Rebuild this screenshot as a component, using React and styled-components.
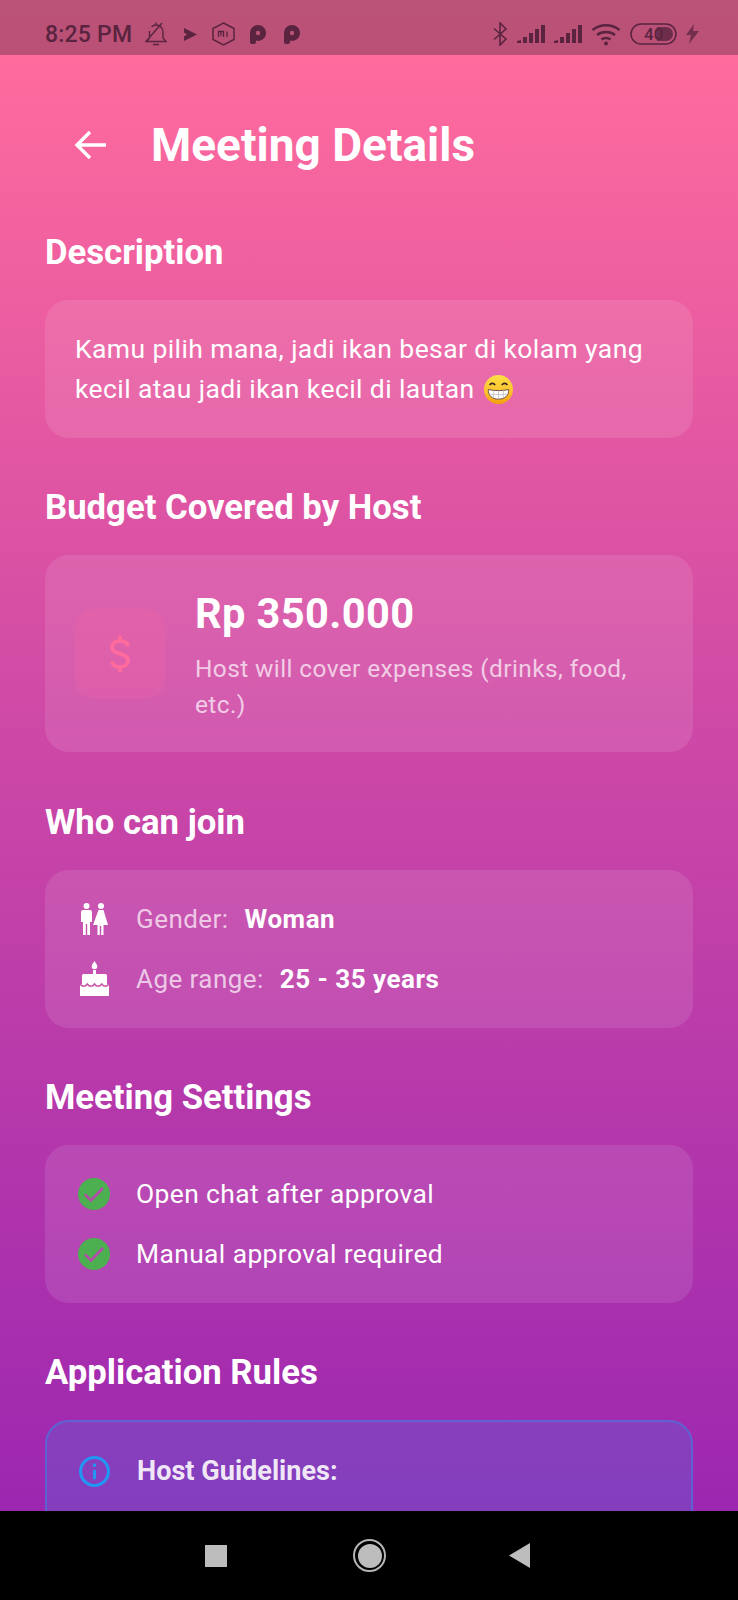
import styled, { createGlobalStyle } from "styled-components";

const Global = createGlobalStyle`
  html, body { margin: 0; padding: 0; background: #000; }
  body { font-family: Roboto, "Liberation Sans", sans-serif; }
`;

const Phone = styled.div`
  width: 738px;
  height: 1600px;
  display: flex;
  flex-direction: column;
  overflow: hidden;
`;

const StatusBar = styled.div`
  height: 55px;
  flex: none;
  background: linear-gradient(to bottom, #bb5278, #ba5076);
  color: #5a2440;
  display: flex;
  align-items: center;
  justify-content: space-between;
  padding: 13px 39px 0 45px;
  box-sizing: border-box;
`;

const StatusGroup = styled.div`
  display: flex;
  align-items: center;
  gap: ${(p) => p.$gap || 12}px;
`;

const Clock = styled.span`
  font-size: 23px;
  font-weight: 500;
  letter-spacing: 0.2px;
  margin-right: -3px;
`;

const Screen = styled.div`
  flex: 1;
  min-height: 0;
  overflow: hidden;
  background: linear-gradient(to bottom, #ff6b9d 0%, #ca46a7 50%, #9c27b0 100%);
  padding: 0 45px;
`;

const Header = styled.header`
  display: flex;
  align-items: center;
  height: 100px;
  margin: 40px 0 38px;
  padding-left: 29px;
  gap: 45px;
`;

const BackButton = styled.button`
  border: 0;
  background: none;
  padding: 0;
  display: flex;
  color: #fff;
`;

const Title = styled.h1`
  margin: 0;
  color: #fff;
  font-size: 46px;
  font-weight: 700;
`;

const SectionTitle = styled.h2`
  margin: 0 0 28px;
  color: #fff;
  font-size: 34.7px;
  line-height: 39px;
  font-weight: 700;
`;

const Section = styled.section`
  margin-bottom: 50.3px;
`;

const Card = styled.div`
  border-radius: 24px;
  background: rgba(255, 255, 255, 0.1);
  padding: 29px 30px;
`;

const Description = styled.p`
  margin: 0;
  color: #fff;
  font-size: 26.5px;
  line-height: 40px;
  letter-spacing: 0.4px;
`;

const BudgetRow = styled.div`
  display: flex;
  align-items: center;
  gap: 30px;
`;

const BudgetIcon = styled.div`
  width: 90px;
  height: 90px;
  flex: none;
  border-radius: 20px;
  background: rgba(255, 107, 157, 0.2);
  display: flex;
  align-items: center;
  justify-content: center;
  color: #ff6b9d;
`;

const Amount = styled.div`
  color: #fff;
  font-size: 41.6px;
  font-weight: 700;
  line-height: 59px;
  letter-spacing: 0.4px;
`;

const Note = styled.div`
  margin-top: 8px;
  color: rgba(255, 255, 255, 0.7);
  font-size: 24.45px;
  line-height: 36px;
  letter-spacing: 0.4px;
`;

const List = styled.div`
  display: flex;
  flex-direction: column;
  gap: 20px;
`;

const Row = styled.div`
  display: flex;
  align-items: center;
  gap: 23px;
  height: 40px;
`;

const RowIcon = styled.div`
  width: 38px;
  flex: none;
  display: flex;
  justify-content: center;
`;

const Label = styled.span`
  color: rgba(255, 255, 255, 0.7);
  font-size: 26px;
  letter-spacing: 0.45px;
  margin-right: 16px;
`;

const Value = styled.span`
  color: #fff;
  font-size: 26px;
  font-weight: 700;
  letter-spacing: 0.5px;
`;

const Plain = styled.span`
  color: #fff;
  font-size: 26.4px;
  letter-spacing: 0.4px;
`;

const InfoCard = styled.div`
  border-radius: 24px 24px 0 0;
  border: 2px solid rgba(33, 150, 243, 0.4);
  background: rgba(33, 150, 243, 0.2);
  padding: 33px 32px;
  height: 200px;
  box-sizing: border-box;
`;

const InfoHead = styled.div`
  display: flex;
  align-items: center;
  gap: 27px;
  color: rgba(255, 255, 255, 0.9);
  font-size: 27.1px;
  font-weight: 700;
`;

const NavBar = styled.nav`
  height: 89px;
  flex: none;
  background: #000;
  display: flex;
  align-items: center;
  padding-left: 205px;
`;

const NavSquare = styled.div`
  width: 22px;
  height: 22px;
  background: #bdbdbd;
`;

const NavCircle = styled.div`
  width: 33px;
  height: 33px;
  margin-left: 126px;
  box-sizing: border-box;
  border-radius: 50%;
  border: 2px solid #b5b5b5;
  display: flex;
  align-items: center;
  justify-content: center;
  &::after {
    content: "";
    width: 24px;
    height: 24px;
    border-radius: 50%;
    background: #bdbdbd;
  }
`;

const NavBack = styled.div`
  width: 21px;
  height: 25px;
  margin-left: 123px;
  background: #bdbdbd;
  clip-path: polygon(0 50%, 100% 0, 100% 100%);
`;

const BellOff = () => (
  <svg width="25" height="26" viewBox="0 0 25 26" fill="none" stroke="currentColor" strokeWidth="1.4">
    <path d="M2 20.500h20l-3-3.500v-6c0-4-3-7-7-7-1.700 0-3.300.7-4.500 1.800M5.500 10v7l-3 3.500M9 23.500h6M12 1.500V4M1.500 21 18 2" />
  </svg>
);

const PlayMark = () => (
  <svg width="13" height="13" viewBox="0 0 13 13" fill="currentColor">
    <path d="M0 0 13 6.500 0 13V8.500L3 6.500 0 4.500z" />
  </svg>
);

const MiBadge = () => (
  <svg width="23" height="24" viewBox="0 0 23 24" fill="none" stroke="currentColor">
    <path d="M11.500 1 22 6.500v11L11.500 23 1 17.500v-11z" strokeWidth="1.5" />
    <path d="M6.500 15V9.500h5V15M9 9.500V14M15 9.500V15" strokeWidth="1.3" />
  </svg>
);

const PMark = () => (
  <svg width="19" height="19" viewBox="0 0 19 19" fill="currentColor">
    <path fillRule="evenodd" d="M0 8a8 8 0 0 1 16 0 8 8 0 0 1-10 7.600V17a2 2 0 0 1-2 2H2a2 2 0 0 1-2-2zM8 5.800a2.200 2.200 0 1 0 0 4.400 2.200 2.200 0 0 0 0-4.400z" />
  </svg>
);

const Bluetooth = () => (
  <svg width="15" height="24" viewBox="0 0 15 24" fill="none" stroke="currentColor" strokeWidth="1.6">
    <path d="M1 6.500 13 17l-6 6V1l6 6L1 17.500" />
  </svg>
);

const Signal = () => (
  <svg width="28" height="20" viewBox="0 0 28 20" fill="currentColor">
    <path d="M0 17l4-1v3H0zM6 13h4v6H6zM12 9h4v10h-4zM18 5h4v14h-4zM24 1h4v18h-4z" />
  </svg>
);

const Wifi = () => (
  <svg width="30" height="24" viewBox="0 0 30 24" fill="none" stroke="currentColor" strokeWidth="2.5">
    <path d="M1.500 8C9 1.500 21 1.500 28.500 8M6 13c5-4 13-4 18 0M10.500 17.500c2.500-2 6.500-2 9 0" />
    <circle cx="15" cy="21.500" r="2" fill="currentColor" stroke="none" />
  </svg>
);

const Battery = () => (
  <svg width="47" height="22" viewBox="0 0 47 22">
    <rect x="1" y="1" width="45" height="20" rx="10" fill="none" stroke="currentColor" strokeWidth="1.5" />
    <path d="M27 4h9a7 7 0 0 1 0 14h-9z" fill="currentColor" opacity="0.8" />
    <text x="14" y="17" fontSize="17" fontWeight="500" fontFamily="Roboto" fill="currentColor">40</text>
  </svg>
);

const Bolt = () => (
  <svg width="13" height="20" viewBox="0 0 13 20" fill="currentColor" opacity="0.75">
    <path d="M8 0 0 11h5l-2 9 10-13H7z" />
  </svg>
);

const BackArrow = () => (
  <svg width="32" height="30" viewBox="0 0 32 30" fill="none" stroke="currentColor" strokeWidth="3.4">
    <path d="M32 15H3M16 2 3 15l13 13" />
  </svg>
);

const Dollar = () => (
  <svg width="20" height="36" viewBox="0 0 20 36" fill="none" stroke="currentColor" strokeWidth="3.8">
    <path d="M18 10.500C17.500 7 14.500 5 10 5 5.500 5 2 7.500 2 11c0 3.500 3 5.500 8 6.700 5 1.300 8 3.300 8 7 0 3.800-3.500 6.300-8 6.300-4.500 0-7.500-2-8-5.500M10 0v5M10 31v5" />
  </svg>
);

const Restroom = () => (
  <svg width="28" height="32" viewBox="0 0 28 32" fill="#fff">
    <circle cx="6.500" cy="3" r="3" />
    <circle cx="21" cy="3" r="3" />
    <path d="M1 9a2 2 0 0 1 2-2h7a2 2 0 0 1 2 2v10h-2v13H7.200V21h-1.400v11H3V19H1z" />
    <path d="M18.500 7h5L28 22h-4.500v10h-2.300v-9h-1.400v9h-2.300V22H13z" />
  </svg>
);

const Cake = () => (
  <svg width="29" height="35" viewBox="0 0 29 35">
    <path d="M14.500 0c2 3 2.800 4 2.800 5.500a2.800 2.800 0 0 1-5.600 0C11.700 4 12.500 3 14.500 0z" fill="#fff" />
    <rect x="13" y="9" width="3" height="5" fill="#fff" />
    <path d="M2 14.500a1.500 1.500 0 0 1 1.500-1.500h22a1.500 1.500 0 0 1 1.500 1.500V23l2 1v11H0V24l2-1z" fill="#fff" />
    <path d="M0 23c2.500 3 5 3 7.250 0 2.250 3 5 3 7.250 0 2.250 3 5 3 7.250 0 2.250 3 4.750 3 7.250 0" fill="none" stroke="#c956ad" strokeWidth="1.6" />
  </svg>
);

const CheckBadge = () => (
  <svg width="32" height="32" viewBox="0 0 32 32">
    <circle cx="16" cy="16" r="16" fill="#4caf50" />
    <path d="M7 16.500l6 6L25 10" fill="none" stroke="#b74bab" strokeWidth="2.6" />
  </svg>
);

const InfoIcon = () => (
  <svg width="31" height="31" viewBox="2 2 20 20" fill="#2196f3">
    <path d="M11 17h2v-6h-2v6zm1-15C6.480 2 2 6.480 2 12s4.480 10 10 10 10-4.480 10-10S17.520 2 12 2zm0 18c-4.410 0-8-3.590-8-8s3.590-8 8-8 8 3.590 8 8-3.590 8-8 8zm-1-11h2V7h-2v2z" />
  </svg>
);

const GrinSvg = styled.svg`
  vertical-align: -6px;
  margin-left: 9px;
`;

const Grin = () => (
  <GrinSvg width="29" height="29" viewBox="0 0 30 30">
    <defs>
      <linearGradient id="grin" x1="0" y1="0" x2="0" y2="1">
        <stop offset="0" stopColor="#fde047" />
        <stop offset="0.6" stopColor="#fbc02d" />
        <stop offset="1" stopColor="#f59e0b" />
      </linearGradient>
    </defs>
    <circle cx="15" cy="15" r="15" fill="url(#grin)" />
    <path d="M6 10.500c1-2.500 4-2.500 5.500 0M18.500 10.500c1.500-2.500 4.500-2.500 5.500 0" fill="none" stroke="#3e2723" strokeWidth="1.8" />
    <path d="M4.500 15c6 1.500 15 1.500 21 0 .5 6-4 10-10.500 10S4 21 4.500 15z" fill="#fff" stroke="#6d4c41" strokeWidth="1" />
    <path d="M5 19.500c6 1.200 14 1.200 20 0M10 16v8M15 16.500v8.500M20 16v8" fill="none" stroke="#bdbdbd" strokeWidth="0.8" />
  </GrinSvg>
);

export default function App() {
  return (
    <Phone>
      <Global />
      <StatusBar>
        <StatusGroup $gap={15}>
          <Clock>8:25 PM</Clock>
          <BellOff />
          <PlayMark />
          <MiBadge />
          <PMark />
          <PMark />
        </StatusGroup>
        <StatusGroup $gap={9}>
          <Bluetooth />
          <Signal />
          <Signal />
          <Wifi />
          <Battery />
          <Bolt />
        </StatusGroup>
      </StatusBar>
      <Screen>
        <Header>
          <BackButton><BackArrow /></BackButton>
          <Title>Meeting Details</Title>
        </Header>
        <Section>
          <SectionTitle>Description</SectionTitle>
          <Card>
            <Description>
              Kamu pilih mana, jadi ikan besar di kolam yang kecil atau jadi ikan kecil di lautan
              <Grin />
            </Description>
          </Card>
        </Section>
        <Section>
          <SectionTitle>Budget Covered by Host</SectionTitle>
          <Card>
            <BudgetRow>
              <BudgetIcon><Dollar /></BudgetIcon>
              <div>
                <Amount>Rp 350.000</Amount>
                <Note>Host will cover expenses (drinks, food, etc.)</Note>
              </div>
            </BudgetRow>
          </Card>
        </Section>
        <Section>
          <SectionTitle>Who can join</SectionTitle>
          <Card>
            <List>
              <Row>
                <RowIcon><Restroom /></RowIcon>
                <div><Label>Gender:</Label><Value>Woman</Value></div>
              </Row>
              <Row>
                <RowIcon><Cake /></RowIcon>
                <div><Label>Age range:</Label><Value>25 - 35 years</Value></div>
              </Row>
            </List>
          </Card>
        </Section>
        <Section>
          <SectionTitle>Meeting Settings</SectionTitle>
          <Card>
            <List>
              <Row>
                <RowIcon><CheckBadge /></RowIcon>
                <Plain>Open chat after approval</Plain>
              </Row>
              <Row>
                <RowIcon><CheckBadge /></RowIcon>
                <Plain>Manual approval required</Plain>
              </Row>
            </List>
          </Card>
        </Section>
        <Section>
          <SectionTitle>Application Rules</SectionTitle>
          <InfoCard>
            <InfoHead><InfoIcon />Host Guidelines:</InfoHead>
          </InfoCard>
        </Section>
      </Screen>
      <NavBar>
        <NavSquare />
        <NavCircle />
        <NavBack />
      </NavBar>
    </Phone>
  );
}
